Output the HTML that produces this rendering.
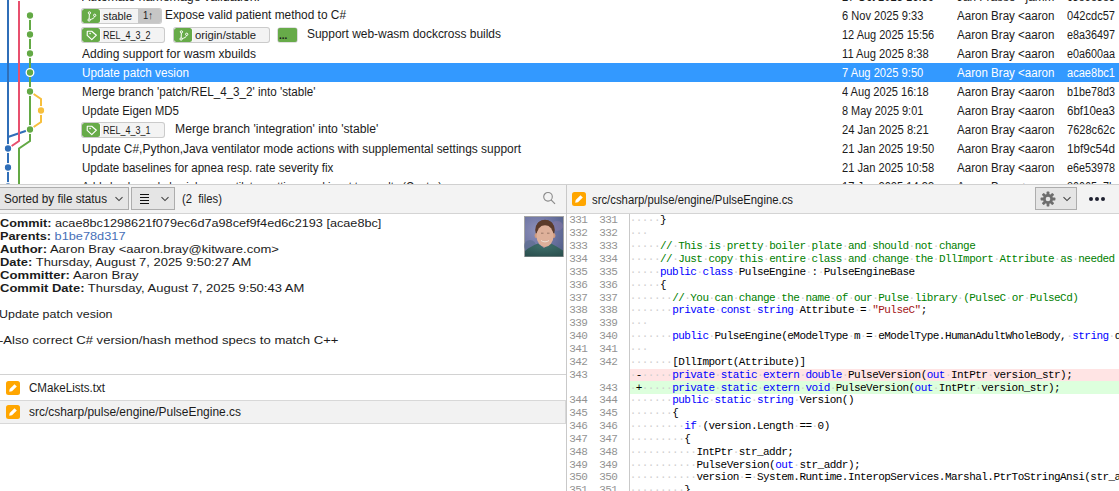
<!DOCTYPE html>
<html><head><meta charset="utf-8"><style>
html,body{margin:0;padding:0;}
body{width:1119px;height:491px;overflow:hidden;position:relative;background:#fff;font-family:'Liberation Sans', sans-serif;}
.t{position:absolute;white-space:pre;}
svg{position:absolute;}
</style></head><body>
<div style="position:absolute;left:0px;top:63px;width:1119px;height:19px;background:#3399ff"></div>
<svg style="left:0;top:0" width="60" height="184" viewBox="0 0 60 184">
<g fill="none" stroke-width="2">
<path d="M8,0 V184" stroke="#2f6eb8"/>
<path d="M8,137 L30,129.5" stroke="#2f6eb8"/>
<path d="M19,1 V141 L8,148.5" stroke="#e8506e"/>
<path d="M30,15.5 V141 L19,148.5 V184" stroke="#63a945"/>
<path d="M30,91.5 L41,99 V122 L30,129.5" stroke="#f7bf3c"/>
</g>
<circle cx="30" cy="15.5" r="3.8" fill="#63a945" stroke="#fff" stroke-width="1.3"/><circle cx="30" cy="34.5" r="3.8" fill="#63a945" stroke="#fff" stroke-width="1.3"/><circle cx="30" cy="53.5" r="3.8" fill="#63a945" stroke="#fff" stroke-width="1.3"/><circle cx="30" cy="72.5" r="3.8" fill="#63a945" stroke="#fff" stroke-width="1.3"/><circle cx="30" cy="91.5" r="3.8" fill="#63a945" stroke="#fff" stroke-width="1.3"/>
<circle cx="41" cy="110.5" r="3.8" fill="#f7bf3c" stroke="#fff" stroke-width="1.3"/><circle cx="30" cy="129.5" r="3.8" fill="#63a945" stroke="#fff" stroke-width="1.3"/><circle cx="8" cy="148.5" r="3.8" fill="#2f6eb8" stroke="#fff" stroke-width="1.3"/><circle cx="8" cy="167.5" r="3.8" fill="#2f6eb8" stroke="#fff" stroke-width="1.3"/><circle cx="8" cy="186.5" r="3.8" fill="#2f6eb8" stroke="#fff" stroke-width="1.3"/>
</svg>
<div id="t2" class="t" style="left:82px;top:-12.16px;font-size:12px;line-height:18px;color:#1b1b1b;font-weight:normal;font-family:'Liberation Sans', sans-serif;transform:scaleX(1.0342);transform-origin:0 0;">Automate namemage validation.</div>
<div style="position:absolute;left:82px;top:8.5px;width:79px;height:14px;background:#f3f3f3;border-radius:2px;box-shadow:0 0 0 1px #cbcbcb;overflow:hidden"><div style="position:absolute;left:0;top:0;width:18px;height:14px;background:#67ab49;border-radius:2.5px;box-shadow:1px 0 0 #fafafa"><svg width="18" height="14" viewBox="0 0 18 14" style="position:absolute;left:0;top:0"><g fill="none" stroke="#fff" stroke-width="1"><circle cx="7.4" cy="3.9" r="1.15"/><circle cx="12.7" cy="6.3" r="1.15"/><circle cx="7.1" cy="11" r="1.15"/><path d="M7.35,5.05 L7.15,9.85 M8.1,10.5 C10.6,10.2 12.3,8.9 12.6,7.45"/></g></svg></div><div style="position:absolute;right:0;top:0;width:23px;height:14px;background:#c6c6c6"></div></div>
<div id="t4" class="t" style="left:103px;top:8.19px;font-size:11px;line-height:16px;color:#1b1b1b;font-weight:normal;font-family:'Liberation Sans', sans-serif;transform:scaleX(0.9878);transform-origin:0 0;">stable</div>
<div id="t5" class="t" style="left:142.5px;top:7.49px;font-size:11px;line-height:16px;color:#1b1b1b;font-weight:normal;font-family:'Liberation Sans', sans-serif;transform:scaleX(0.8602);transform-origin:0 0;">1↑</div>
<div id="t6" class="t" style="left:165px;top:5.84px;font-size:12px;line-height:18px;color:#1b1b1b;font-weight:normal;font-family:'Liberation Sans', sans-serif;transform:scaleX(0.9903);transform-origin:0 0;">Expose valid patient method to C#</div>
<div style="position:absolute;left:82px;top:27.5px;width:82px;height:14px;background:#f3f3f3;border-radius:2px;box-shadow:0 0 0 1px #cbcbcb;overflow:hidden"><div style="position:absolute;left:0;top:0;width:18px;height:14px;background:#67ab49;border-radius:2.5px;box-shadow:1px 0 0 #fafafa"><svg width="18" height="14" viewBox="0 0 18 14" style="position:absolute;left:0;top:0"><path d="M5.3,3.2 H9.7 L14.4,7.2 L9.8,11.7 L5.2,7.3 Z" fill="none" stroke="#fff" stroke-width="1.15" stroke-linejoin="round"/><rect x="7.4" y="4.8" width="1.4" height="1.4" fill="#fff"/></svg></div></div>
<div id="t8" class="t" style="left:103px;top:27.19px;font-size:11px;line-height:16px;color:#1b1b1b;font-weight:normal;font-family:'Liberation Sans', sans-serif;transform:scaleX(0.8174);transform-origin:0 0;">REL_4_3_2</div>
<div style="position:absolute;left:174px;top:27.5px;width:95px;height:14px;background:#f3f3f3;border-radius:2px;box-shadow:0 0 0 1px #cbcbcb;overflow:hidden"><div style="position:absolute;left:0;top:0;width:18px;height:14px;background:#67ab49;border-radius:2.5px;box-shadow:1px 0 0 #fafafa"><svg width="18" height="14" viewBox="0 0 18 14" style="position:absolute;left:0;top:0"><g fill="none" stroke="#fff" stroke-width="1"><circle cx="7.4" cy="3.9" r="1.15"/><circle cx="12.7" cy="6.3" r="1.15"/><circle cx="7.1" cy="11" r="1.15"/><path d="M7.35,5.05 L7.15,9.85 M8.1,10.5 C10.6,10.2 12.3,8.9 12.6,7.45"/></g></svg></div></div>
<div id="t10" class="t" style="left:195px;top:27.19px;font-size:11px;line-height:16px;color:#1b1b1b;font-weight:normal;font-family:'Liberation Sans', sans-serif;transform:scaleX(1.0282);transform-origin:0 0;">origin/stable</div>
<div style="position:absolute;left:278px;top:27.5px;width:19px;height:14px;background:#67ab49;border-radius:2px;box-shadow:0 0 0 0.6px #c4c4c4"></div>
<div id="t12" class="t" style="left:279px;top:28.04px;font-size:10px;line-height:15px;color:#1b1b1b;font-weight:bold;font-family:'Liberation Sans', sans-serif;">...</div>
<div id="t13" class="t" style="left:307px;top:24.84px;font-size:12px;line-height:18px;color:#1b1b1b;font-weight:normal;font-family:'Liberation Sans', sans-serif;transform:scaleX(0.9961);transform-origin:0 0;">Support web-wasm dockcross builds</div>
<div id="t14" class="t" style="left:82px;top:44.84px;font-size:12px;line-height:18px;color:#1b1b1b;font-weight:normal;font-family:'Liberation Sans', sans-serif;transform:scaleX(1.0033);transform-origin:0 0;">Adding support for wasm xbuilds</div>
<div id="t15" class="t" style="left:82px;top:63.84px;font-size:12px;line-height:18px;color:#fff;font-weight:normal;font-family:'Liberation Sans', sans-serif;transform:scaleX(0.9780);transform-origin:0 0;">Update patch vesion</div>
<div id="t16" class="t" style="left:82px;top:82.84px;font-size:12px;line-height:18px;color:#1b1b1b;font-weight:normal;font-family:'Liberation Sans', sans-serif;transform:scaleX(0.9703);transform-origin:0 0;">Merge branch 'patch/REL_4_3_2' into 'stable'</div>
<div id="t17" class="t" style="left:82px;top:101.84px;font-size:12px;line-height:18px;color:#1b1b1b;font-weight:normal;font-family:'Liberation Sans', sans-serif;transform:scaleX(0.9567);transform-origin:0 0;">Update Eigen MD5</div>
<div style="position:absolute;left:82px;top:122.5px;width:82px;height:14px;background:#f3f3f3;border-radius:2px;box-shadow:0 0 0 1px #cbcbcb;overflow:hidden"><div style="position:absolute;left:0;top:0;width:18px;height:14px;background:#67ab49;border-radius:2.5px;box-shadow:1px 0 0 #fafafa"><svg width="18" height="14" viewBox="0 0 18 14" style="position:absolute;left:0;top:0"><path d="M5.3,3.2 H9.7 L14.4,7.2 L9.8,11.7 L5.2,7.3 Z" fill="none" stroke="#fff" stroke-width="1.15" stroke-linejoin="round"/><rect x="7.4" y="4.8" width="1.4" height="1.4" fill="#fff"/></svg></div></div>
<div id="t19" class="t" style="left:103px;top:122.19px;font-size:11px;line-height:16px;color:#1b1b1b;font-weight:normal;font-family:'Liberation Sans', sans-serif;transform:scaleX(0.8174);transform-origin:0 0;">REL_4_3_1</div>
<div id="t20" class="t" style="left:175px;top:119.84px;font-size:12px;line-height:18px;color:#1b1b1b;font-weight:normal;font-family:'Liberation Sans', sans-serif;transform:scaleX(1.0133);transform-origin:0 0;">Merge branch 'integration' into 'stable'</div>
<div id="t21" class="t" style="left:82px;top:139.84px;font-size:12px;line-height:18px;color:#1b1b1b;font-weight:normal;font-family:'Liberation Sans', sans-serif;transform:scaleX(0.9956);transform-origin:0 0;">Update C#,Python,Java ventilator mode actions with supplemental settings support</div>
<div id="t22" class="t" style="left:82px;top:158.84px;font-size:12px;line-height:18px;color:#1b1b1b;font-weight:normal;font-family:'Liberation Sans', sans-serif;transform:scaleX(0.9635);transform-origin:0 0;">Update baselines for apnea resp. rate severity fix</div>
<div id="t23" class="t" style="left:82px;top:177.84px;font-size:12px;line-height:18px;color:#1b1b1b;font-weight:normal;font-family:'Liberation Sans', sans-serif;transform:scaleX(0.9148);transform-origin:0 0;">Add checks and physiology ventilator settings and input to results (Cont...)</div>
<div style="position:absolute;left:835px;top:0;width:115px;height:491px;overflow:hidden"><div style="position:absolute;left:-835px;top:0;width:1119px;height:491px"><div id="t24" class="t" style="left:842px;top:-12.16px;font-size:12px;line-height:18px;color:#1b1b1b;font-weight:normal;font-family:'Liberation Sans', sans-serif;transform:scaleX(0.9331);transform-origin:0 0;">27 Oct 2025 16:39</div></div></div>
<div style="position:absolute;left:950px;top:0;width:106px;height:491px;overflow:hidden"><div style="position:absolute;left:-950px;top:0;width:1119px;height:491px"><div id="t25" class="t" style="left:957px;top:-12.16px;font-size:12px;line-height:18px;color:#1b1b1b;font-weight:normal;font-family:'Liberation Sans', sans-serif;transform:scaleX(0.9835);transform-origin:0 0;">Jan Frasse &lt;jamm</div></div></div>
<div style="position:absolute;left:1060px;top:0;width:57px;height:491px;overflow:hidden"><div style="position:absolute;left:-1060px;top:0;width:1119px;height:491px"><div id="t26" class="t" style="left:1067px;top:-12.16px;font-size:12px;line-height:18px;color:#1b1b1b;font-weight:normal;font-family:'Liberation Sans', sans-serif;transform:scaleX(0.9105);transform-origin:0 0;">c5e6e5e5</div></div></div>
<div style="position:absolute;left:835px;top:0;width:115px;height:491px;overflow:hidden"><div style="position:absolute;left:-835px;top:0;width:1119px;height:491px"><div id="t27" class="t" style="left:842px;top:6.84px;font-size:12px;line-height:18px;color:#1b1b1b;font-weight:normal;font-family:'Liberation Sans', sans-serif;transform:scaleX(0.9230);transform-origin:0 0;">6 Nov 2025 9:33</div></div></div>
<div style="position:absolute;left:950px;top:0;width:106px;height:491px;overflow:hidden"><div style="position:absolute;left:-950px;top:0;width:1119px;height:491px"><div id="t28" class="t" style="left:957px;top:6.84px;font-size:12px;line-height:18px;color:#1b1b1b;font-weight:normal;font-family:'Liberation Sans', sans-serif;transform:scaleX(0.9638);transform-origin:0 0;">Aaron Bray &lt;aaron</div></div></div>
<div style="position:absolute;left:1060px;top:0;width:57px;height:491px;overflow:hidden"><div style="position:absolute;left:-1060px;top:0;width:1119px;height:491px"><div id="t29" class="t" style="left:1067px;top:6.84px;font-size:12px;line-height:18px;color:#1b1b1b;font-weight:normal;font-family:'Liberation Sans', sans-serif;transform:scaleX(0.9222);transform-origin:0 0;">042cdc57</div></div></div>
<div style="position:absolute;left:835px;top:0;width:115px;height:491px;overflow:hidden"><div style="position:absolute;left:-835px;top:0;width:1119px;height:491px"><div id="t30" class="t" style="left:842px;top:25.84px;font-size:12px;line-height:18px;color:#1b1b1b;font-weight:normal;font-family:'Liberation Sans', sans-serif;transform:scaleX(0.9144);transform-origin:0 0;">12 Aug 2025 15:56</div></div></div>
<div style="position:absolute;left:950px;top:0;width:106px;height:491px;overflow:hidden"><div style="position:absolute;left:-950px;top:0;width:1119px;height:491px"><div id="t31" class="t" style="left:957px;top:25.84px;font-size:12px;line-height:18px;color:#1b1b1b;font-weight:normal;font-family:'Liberation Sans', sans-serif;transform:scaleX(0.9638);transform-origin:0 0;">Aaron Bray &lt;aaron</div></div></div>
<div style="position:absolute;left:1060px;top:0;width:57px;height:491px;overflow:hidden"><div style="position:absolute;left:-1060px;top:0;width:1119px;height:491px"><div id="t32" class="t" style="left:1067px;top:25.84px;font-size:12px;line-height:18px;color:#1b1b1b;font-weight:normal;font-family:'Liberation Sans', sans-serif;transform:scaleX(0.8990);transform-origin:0 0;">e8a36497</div></div></div>
<div style="position:absolute;left:835px;top:0;width:115px;height:491px;overflow:hidden"><div style="position:absolute;left:-835px;top:0;width:1119px;height:491px"><div id="t33" class="t" style="left:842px;top:44.84px;font-size:12px;line-height:18px;color:#1b1b1b;font-weight:normal;font-family:'Liberation Sans', sans-serif;transform:scaleX(0.9304);transform-origin:0 0;">11 Aug 2025 8:38</div></div></div>
<div style="position:absolute;left:950px;top:0;width:106px;height:491px;overflow:hidden"><div style="position:absolute;left:-950px;top:0;width:1119px;height:491px"><div id="t34" class="t" style="left:957px;top:44.84px;font-size:12px;line-height:18px;color:#1b1b1b;font-weight:normal;font-family:'Liberation Sans', sans-serif;transform:scaleX(0.9638);transform-origin:0 0;">Aaron Bray &lt;aaron</div></div></div>
<div style="position:absolute;left:1060px;top:0;width:57px;height:491px;overflow:hidden"><div style="position:absolute;left:-1060px;top:0;width:1119px;height:491px"><div id="t35" class="t" style="left:1067px;top:44.84px;font-size:12px;line-height:18px;color:#1b1b1b;font-weight:normal;font-family:'Liberation Sans', sans-serif;transform:scaleX(0.8990);transform-origin:0 0;">e0a600aa</div></div></div>
<div style="position:absolute;left:835px;top:0;width:115px;height:491px;overflow:hidden"><div style="position:absolute;left:-835px;top:0;width:1119px;height:491px"><div id="t36" class="t" style="left:842px;top:63.84px;font-size:12px;line-height:18px;color:#fff;font-weight:normal;font-family:'Liberation Sans', sans-serif;transform:scaleX(0.9300);transform-origin:0 0;">7 Aug 2025 9:50</div></div></div>
<div style="position:absolute;left:950px;top:0;width:106px;height:491px;overflow:hidden"><div style="position:absolute;left:-950px;top:0;width:1119px;height:491px"><div id="t37" class="t" style="left:957px;top:63.84px;font-size:12px;line-height:18px;color:#fff;font-weight:normal;font-family:'Liberation Sans', sans-serif;transform:scaleX(0.9638);transform-origin:0 0;">Aaron Bray &lt;aaron</div></div></div>
<div style="position:absolute;left:1060px;top:0;width:57px;height:491px;overflow:hidden"><div style="position:absolute;left:-1060px;top:0;width:1119px;height:491px"><div id="t38" class="t" style="left:1067px;top:63.84px;font-size:12px;line-height:18px;color:#fff;font-weight:normal;font-family:'Liberation Sans', sans-serif;transform:scaleX(0.9222);transform-origin:0 0;">acae8bc1</div></div></div>
<div style="position:absolute;left:835px;top:0;width:115px;height:491px;overflow:hidden"><div style="position:absolute;left:-835px;top:0;width:1119px;height:491px"><div id="t39" class="t" style="left:842px;top:82.84px;font-size:12px;line-height:18px;color:#1b1b1b;font-weight:normal;font-family:'Liberation Sans', sans-serif;transform:scaleX(0.9216);transform-origin:0 0;">4 Aug 2025 16:18</div></div></div>
<div style="position:absolute;left:950px;top:0;width:106px;height:491px;overflow:hidden"><div style="position:absolute;left:-950px;top:0;width:1119px;height:491px"><div id="t40" class="t" style="left:957px;top:82.84px;font-size:12px;line-height:18px;color:#1b1b1b;font-weight:normal;font-family:'Liberation Sans', sans-serif;transform:scaleX(0.9638);transform-origin:0 0;">Aaron Bray &lt;aaron</div></div></div>
<div style="position:absolute;left:1060px;top:0;width:57px;height:491px;overflow:hidden"><div style="position:absolute;left:-1060px;top:0;width:1119px;height:491px"><div id="t41" class="t" style="left:1067px;top:82.84px;font-size:12px;line-height:18px;color:#1b1b1b;font-weight:normal;font-family:'Liberation Sans', sans-serif;transform:scaleX(0.8990);transform-origin:0 0;">b1be78d3</div></div></div>
<div style="position:absolute;left:835px;top:0;width:115px;height:491px;overflow:hidden"><div style="position:absolute;left:-835px;top:0;width:1119px;height:491px"><div id="t42" class="t" style="left:842px;top:101.84px;font-size:12px;line-height:18px;color:#1b1b1b;font-weight:normal;font-family:'Liberation Sans', sans-serif;transform:scaleX(0.9093);transform-origin:0 0;">8 May 2025 9:01</div></div></div>
<div style="position:absolute;left:950px;top:0;width:106px;height:491px;overflow:hidden"><div style="position:absolute;left:-950px;top:0;width:1119px;height:491px"><div id="t43" class="t" style="left:957px;top:101.84px;font-size:12px;line-height:18px;color:#1b1b1b;font-weight:normal;font-family:'Liberation Sans', sans-serif;transform:scaleX(0.9638);transform-origin:0 0;">Aaron Bray &lt;aaron</div></div></div>
<div style="position:absolute;left:1060px;top:0;width:57px;height:491px;overflow:hidden"><div style="position:absolute;left:-1060px;top:0;width:1119px;height:491px"><div id="t44" class="t" style="left:1067px;top:101.84px;font-size:12px;line-height:18px;color:#1b1b1b;font-weight:normal;font-family:'Liberation Sans', sans-serif;transform:scaleX(0.9588);transform-origin:0 0;">6bf10ea3</div></div></div>
<div style="position:absolute;left:835px;top:0;width:115px;height:491px;overflow:hidden"><div style="position:absolute;left:-835px;top:0;width:1119px;height:491px"><div id="t45" class="t" style="left:842px;top:120.84px;font-size:12px;line-height:18px;color:#1b1b1b;font-weight:normal;font-family:'Liberation Sans', sans-serif;transform:scaleX(0.9350);transform-origin:0 0;">24 Jan 2025 8:21</div></div></div>
<div style="position:absolute;left:950px;top:0;width:106px;height:491px;overflow:hidden"><div style="position:absolute;left:-950px;top:0;width:1119px;height:491px"><div id="t46" class="t" style="left:957px;top:120.84px;font-size:12px;line-height:18px;color:#1b1b1b;font-weight:normal;font-family:'Liberation Sans', sans-serif;transform:scaleX(0.9638);transform-origin:0 0;">Aaron Bray &lt;aaron</div></div></div>
<div style="position:absolute;left:1060px;top:0;width:57px;height:491px;overflow:hidden"><div style="position:absolute;left:-1060px;top:0;width:1119px;height:491px"><div id="t47" class="t" style="left:1067px;top:120.84px;font-size:12px;line-height:18px;color:#1b1b1b;font-weight:normal;font-family:'Liberation Sans', sans-serif;transform:scaleX(0.9222);transform-origin:0 0;">7628c62c</div></div></div>
<div style="position:absolute;left:835px;top:0;width:115px;height:491px;overflow:hidden"><div style="position:absolute;left:-835px;top:0;width:1119px;height:491px"><div id="t48" class="t" style="left:842px;top:139.84px;font-size:12px;line-height:18px;color:#1b1b1b;font-weight:normal;font-family:'Liberation Sans', sans-serif;transform:scaleX(0.9268);transform-origin:0 0;">21 Jan 2025 19:50</div></div></div>
<div style="position:absolute;left:950px;top:0;width:106px;height:491px;overflow:hidden"><div style="position:absolute;left:-950px;top:0;width:1119px;height:491px"><div id="t49" class="t" style="left:957px;top:139.84px;font-size:12px;line-height:18px;color:#1b1b1b;font-weight:normal;font-family:'Liberation Sans', sans-serif;transform:scaleX(0.9638);transform-origin:0 0;">Aaron Bray &lt;aaron</div></div></div>
<div style="position:absolute;left:1060px;top:0;width:57px;height:491px;overflow:hidden"><div style="position:absolute;left:-1060px;top:0;width:1119px;height:491px"><div id="t50" class="t" style="left:1067px;top:139.84px;font-size:12px;line-height:18px;color:#1b1b1b;font-weight:normal;font-family:'Liberation Sans', sans-serif;transform:scaleX(0.9718);transform-origin:0 0;">1bf9c54d</div></div></div>
<div style="position:absolute;left:835px;top:0;width:115px;height:491px;overflow:hidden"><div style="position:absolute;left:-835px;top:0;width:1119px;height:491px"><div id="t51" class="t" style="left:842px;top:158.84px;font-size:12px;line-height:18px;color:#1b1b1b;font-weight:normal;font-family:'Liberation Sans', sans-serif;transform:scaleX(0.9268);transform-origin:0 0;">21 Jan 2025 10:58</div></div></div>
<div style="position:absolute;left:950px;top:0;width:106px;height:491px;overflow:hidden"><div style="position:absolute;left:-950px;top:0;width:1119px;height:491px"><div id="t52" class="t" style="left:957px;top:158.84px;font-size:12px;line-height:18px;color:#1b1b1b;font-weight:normal;font-family:'Liberation Sans', sans-serif;transform:scaleX(0.9638);transform-origin:0 0;">Aaron Bray &lt;aaron</div></div></div>
<div style="position:absolute;left:1060px;top:0;width:57px;height:491px;overflow:hidden"><div style="position:absolute;left:-1060px;top:0;width:1119px;height:491px"><div id="t53" class="t" style="left:1067px;top:158.84px;font-size:12px;line-height:18px;color:#1b1b1b;font-weight:normal;font-family:'Liberation Sans', sans-serif;transform:scaleX(0.8990);transform-origin:0 0;">e6e53978</div></div></div>
<div style="position:absolute;left:835px;top:0;width:115px;height:491px;overflow:hidden"><div style="position:absolute;left:-835px;top:0;width:1119px;height:491px"><div id="t54" class="t" style="left:842px;top:177.84px;font-size:12px;line-height:18px;color:#1b1b1b;font-weight:normal;font-family:'Liberation Sans', sans-serif;transform:scaleX(0.9268);transform-origin:0 0;">17 Jan 2025 14:33</div></div></div>
<div style="position:absolute;left:950px;top:0;width:106px;height:491px;overflow:hidden"><div style="position:absolute;left:-950px;top:0;width:1119px;height:491px"><div id="t55" class="t" style="left:957px;top:177.84px;font-size:12px;line-height:18px;color:#1b1b1b;font-weight:normal;font-family:'Liberation Sans', sans-serif;transform:scaleX(0.9638);transform-origin:0 0;">Aaron Bray &lt;aaron</div></div></div>
<div style="position:absolute;left:1060px;top:0;width:57px;height:491px;overflow:hidden"><div style="position:absolute;left:-1060px;top:0;width:1119px;height:491px"><div id="t56" class="t" style="left:1067px;top:177.84px;font-size:12px;line-height:18px;color:#1b1b1b;font-weight:normal;font-family:'Liberation Sans', sans-serif;transform:scaleX(0.8990);transform-origin:0 0;">80065e7b</div></div></div>
<div style="position:absolute;left:0px;top:184px;width:1119px;height:1px;background:#d0d0d0"></div>
<div style="position:absolute;left:0px;top:185px;width:566px;height:28px;background:#f3f3f3"></div>
<div style="position:absolute;left:567px;top:185px;width:552px;height:28px;background:#f3f3f3"></div>
<div style="position:absolute;left:0px;top:213px;width:1119px;height:1px;background:#d4d4d4"></div>
<div style="position:absolute;left:566px;top:185px;width:1px;height:306px;background:#c9c9c9"></div>
<div style="position:absolute;left:-1px;top:187px;width:130px;height:23px;background:#e5e5e5;border:1px solid #adadad;box-sizing:border-box"></div>
<div id="t63" class="t" style="left:4px;top:189.84px;font-size:12px;line-height:18px;color:#1b1b1b;font-weight:normal;font-family:'Liberation Sans', sans-serif;transform:scaleX(0.9773);transform-origin:0 0;">Sorted by file status</div>
<svg style="left:114px;top:196px" width="10" height="6" viewBox="0 0 10 6"><path d="M1.5,1.2 L5,4.6 L8.5,1.2" fill="none" stroke="#444" stroke-width="1.1"/></svg>
<div style="position:absolute;left:131px;top:187px;width:44px;height:23px;background:#e5e5e5;border:1px solid #adadad;box-sizing:border-box"></div>
<svg style="left:140px;top:193px" width="10" height="12" viewBox="0 0 10 12"><path d="M0,1.5 H9 M0,4.5 H9 M0,7.5 H9 M0,10.5 H9" fill="none" stroke="#111" stroke-width="1.2"/></svg>
<svg style="left:160px;top:196px" width="10" height="6" viewBox="0 0 10 6"><path d="M1.5,1.2 L5,4.6 L8.5,1.2" fill="none" stroke="#444" stroke-width="1.1"/></svg>
<div id="t68" class="t" style="left:182px;top:189.84px;font-size:12px;line-height:18px;color:#1b1b1b;font-weight:normal;font-family:'Liberation Sans', sans-serif;transform:scaleX(0.9370);transform-origin:0 0;">(2  files)</div>
<svg style="left:541px;top:191px" width="16" height="16" viewBox="0 0 16 16"><circle cx="7" cy="5.8" r="4.3" fill="none" stroke="#8a8a8a" stroke-width="1.1"/><path d="M10.1,8.9 L14,12.8" stroke="#8a8a8a" stroke-width="1.2"/></svg>
<svg style="left:572px;top:192px" width="14" height="14" viewBox="0 0 14 14"><rect x="0" y="0" width="14" height="14" rx="2.5" fill="#ffa600"/><path d="M3.2,10.8 L3.7,8 L8.5,3.2 L10.8,5.5 L6,10.3 Z" fill="#fff"/></svg>
<div id="t71" class="t" style="left:592px;top:190.84px;font-size:12px;line-height:18px;color:#1b1b1b;font-weight:normal;font-family:'Liberation Sans', sans-serif;transform:scaleX(0.9446);transform-origin:0 0;">src/csharp/pulse/engine/PulseEngine.cs</div>
<div style="position:absolute;left:1035px;top:187px;width:42px;height:23px;background:#e5e5e5;border:1px solid #adadad;box-sizing:border-box"></div>
<svg style="left:1040px;top:191px" width="16" height="16" viewBox="0 0 16 16"><g fill="#6e6e6e"><circle cx="8" cy="8" r="5"/><rect x="6.6" y="0.6" width="2.8" height="3.4" rx="0.6" transform="rotate(0 8 8)"/><rect x="6.6" y="0.6" width="2.8" height="3.4" rx="0.6" transform="rotate(45 8 8)"/><rect x="6.6" y="0.6" width="2.8" height="3.4" rx="0.6" transform="rotate(90 8 8)"/><rect x="6.6" y="0.6" width="2.8" height="3.4" rx="0.6" transform="rotate(135 8 8)"/><rect x="6.6" y="0.6" width="2.8" height="3.4" rx="0.6" transform="rotate(180 8 8)"/><rect x="6.6" y="0.6" width="2.8" height="3.4" rx="0.6" transform="rotate(225 8 8)"/><rect x="6.6" y="0.6" width="2.8" height="3.4" rx="0.6" transform="rotate(270 8 8)"/><rect x="6.6" y="0.6" width="2.8" height="3.4" rx="0.6" transform="rotate(315 8 8)"/></g><circle cx="8" cy="8" r="2.3" fill="#e5e5e5"/></svg>
<svg style="left:1062px;top:196px" width="10" height="6" viewBox="0 0 10 6"><path d="M1.5,1.2 L5,4.6 L8.5,1.2" fill="none" stroke="#444" stroke-width="1.1"/></svg>
<svg style="left:1086px;top:195px" width="22" height="8" viewBox="0 0 22 8"><g fill="#1e2030"><circle cx="5" cy="4" r="2"/><circle cx="11" cy="4" r="2"/><circle cx="17" cy="4" r="2"/></g></svg>
<div id="t76" class="t" style="left:0px;top:214.99px;font-size:11px;line-height:16px;color:#1b1b1b;font-weight:normal;font-family:'Liberation Sans', sans-serif;"></div>
<div id="t77" class="t" style="left:0px;top:214.99px;font-size:11px;line-height:16px;color:#1b1b1b;font-weight:normal;font-family:'Liberation Sans', sans-serif;transform:scaleX(1.1527);transform-origin:0 0;"><b>Commit:</b> <span style="color:#1b1b1b">acae8bc1298621f079ec6d7a98cef9f4ed6c2193 [acae8bc]</span></div>
<div id="t78" class="t" style="left:0px;top:227.99px;font-size:11px;line-height:16px;color:#1b1b1b;font-weight:normal;font-family:'Liberation Sans', sans-serif;transform:scaleX(1.1590);transform-origin:0 0;"><b>Parents:</b> <span style="color:#4870b8">b1be78d317</span></div>
<div id="t79" class="t" style="left:0px;top:240.99px;font-size:11px;line-height:16px;color:#1b1b1b;font-weight:normal;font-family:'Liberation Sans', sans-serif;transform:scaleX(1.1841);transform-origin:0 0;"><b>Author:</b> <span style="color:#1b1b1b">Aaron Bray &lt;aaron.bray@kitware.com&gt;</span></div>
<div id="t80" class="t" style="left:0px;top:253.99px;font-size:11px;line-height:16px;color:#1b1b1b;font-weight:normal;font-family:'Liberation Sans', sans-serif;transform:scaleX(1.1767);transform-origin:0 0;"><b>Date:</b> <span style="color:#1b1b1b">Thursday, August 7, 2025 9:50:27 AM</span></div>
<div id="t81" class="t" style="left:0px;top:266.99px;font-size:11px;line-height:16px;color:#1b1b1b;font-weight:normal;font-family:'Liberation Sans', sans-serif;transform:scaleX(1.1924);transform-origin:0 0;"><b>Committer:</b> <span style="color:#1b1b1b">Aaron Bray</span></div>
<div id="t82" class="t" style="left:0px;top:279.99px;font-size:11px;line-height:16px;color:#1b1b1b;font-weight:normal;font-family:'Liberation Sans', sans-serif;transform:scaleX(1.1811);transform-origin:0 0;"><b>Commit Date:</b> <span style="color:#1b1b1b">Thursday, August 7, 2025 9:50:43 AM</span></div>
<div id="t83" class="t" style="left:-1px;top:305.99px;font-size:11px;line-height:16px;color:#1b1b1b;font-weight:normal;font-family:'Liberation Sans', sans-serif;transform:scaleX(1.1316);transform-origin:0 0;">Update patch vesion</div>
<div id="t84" class="t" style="left:-1px;top:331.99px;font-size:11px;line-height:16px;color:#1b1b1b;font-weight:normal;font-family:'Liberation Sans', sans-serif;transform:scaleX(1.1916);transform-origin:0 0;">-Also correct C# version/hash method specs to match C++</div>
<svg style="left:524px;top:216px" width="40" height="41" viewBox="0 0 40 41">
<defs><radialGradient id="bg" cx="0.3" cy="0.35" r="0.85"><stop offset="0" stop-color="#8c8fb8"/><stop offset="0.55" stop-color="#6d74a2"/><stop offset="1" stop-color="#525f88"/></radialGradient>
<radialGradient id="sh" cx="0.5" cy="0.2" r="0.9"><stop offset="0" stop-color="#3f6f6a"/><stop offset="1" stop-color="#2a4f4e"/></radialGradient></defs>
<rect x="0.5" y="0.5" width="39" height="40" fill="url(#bg)" stroke="#a4a4a4" stroke-width="1"/>
<ellipse cx="33" cy="10" rx="6" ry="5" fill="#8a7aa8" opacity="0.5"/>
<ellipse cx="6" cy="30" rx="6" ry="6" fill="#5a6c8c" opacity="0.6"/>
<path d="M1,40.5 L1,35 C4,32 9,29.5 14,27.5 L20,32 L27,27.5 C31,29.5 35,32 39,34.5 L39,40.5 Z" fill="url(#sh)"/>
<path d="M15,25.5 L20,32 L25.5,25.5 Z" fill="#c8937c"/>
<ellipse cx="21" cy="14" rx="9.8" ry="10.3" fill="#5b3b2b"/>
<ellipse cx="12.2" cy="19.5" rx="1.6" ry="2.6" fill="#cf9a80"/>
<ellipse cx="29.8" cy="19.5" rx="1.6" ry="2.6" fill="#cf9a80"/>
<ellipse cx="21" cy="20" rx="8.5" ry="11" fill="#deb09a"/>
<path d="M12.3,16 C12.5,11 15,9.2 21,9.2 C27,9.2 29.5,11 29.7,16 C31,9 28,4 21,4 C14,4 11,9 12.3,16 Z" fill="#5b3b2b"/>
<path d="M17,17.2 h2.5 M23,17.2 h2.5" stroke="#8a6a5a" stroke-width="0.8"/>
<path d="M17,24.5 C19,26.3 23,26.3 25,24.5" fill="none" stroke="#f0e2d6" stroke-width="1"/>
</svg>
<div style="position:absolute;left:0px;top:374px;width:566px;height:1px;background:#d2d2d2"></div>
<div style="position:absolute;left:0px;top:400px;width:566px;height:24px;background:#f2f2f2;border-top:1px solid #d8d8d8;border-bottom:1px solid #d8d8d8;border-right:1px solid #d8d8d8;box-sizing:border-box"></div>
<svg style="left:6px;top:381px" width="14" height="14" viewBox="0 0 14 14"><rect x="0" y="0" width="14" height="14" rx="2.5" fill="#ffa600"/><path d="M3.2,10.8 L3.7,8 L8.5,3.2 L10.8,5.5 L6,10.3 Z" fill="#fff"/></svg>
<svg style="left:6px;top:405px" width="14" height="14" viewBox="0 0 14 14"><rect x="0" y="0" width="14" height="14" rx="2.5" fill="#ffa600"/><path d="M3.2,10.8 L3.7,8 L8.5,3.2 L10.8,5.5 L6,10.3 Z" fill="#fff"/></svg>
<div id="t90" class="t" style="left:29px;top:378.84px;font-size:12px;line-height:18px;color:#1b1b1b;font-weight:normal;font-family:'Liberation Sans', sans-serif;transform:scaleX(0.9658);transform-origin:0 0;">CMakeLists.txt</div>
<div id="t91" class="t" style="left:29px;top:402.84px;font-size:12px;line-height:18px;color:#1b1b1b;font-weight:normal;font-family:'Liberation Sans', sans-serif;transform:scaleX(0.9963);transform-origin:0 0;">src/csharp/pulse/engine/PulseEngine.cs</div>
<div style="position:absolute;left:629px;top:214px;width:1px;height:277px;background:#c9c9c9"></div>
<div id="t93" class="t" style="left:569.2px;top:212.47px;font-size:11px;line-height:16px;color:#939393;font-weight:normal;font-family:'Liberation Mono', monospace;letter-spacing:-0.54px">331</div>
<div id="t94" class="t" style="left:599.2px;top:212.47px;font-size:11px;line-height:16px;color:#939393;font-weight:normal;font-family:'Liberation Mono', monospace;letter-spacing:-0.54px">331</div>
<div style="position:absolute;left:630px;top:0;width:489px;height:491px;overflow:hidden"><div style="position:absolute;left:-630px;top:0;width:1119px;height:491px"><div id="t95" class="t" style="left:629.7px;top:212.47px;font-size:11px;line-height:16px;color:#000000;font-weight:normal;font-family:'Liberation Mono', monospace;letter-spacing:-0.54px"><span style="color:#cfcfcf">·····</span>}</div></div></div>
<div id="t96" class="t" style="left:569.2px;top:225.32px;font-size:11px;line-height:16px;color:#939393;font-weight:normal;font-family:'Liberation Mono', monospace;letter-spacing:-0.54px">332</div>
<div id="t97" class="t" style="left:599.2px;top:225.32px;font-size:11px;line-height:16px;color:#939393;font-weight:normal;font-family:'Liberation Mono', monospace;letter-spacing:-0.54px">332</div>
<div style="position:absolute;left:630px;top:0;width:489px;height:491px;overflow:hidden"><div style="position:absolute;left:-630px;top:0;width:1119px;height:491px"><div id="t98" class="t" style="left:629.7px;top:225.32px;font-size:11px;line-height:16px;color:#000000;font-weight:normal;font-family:'Liberation Mono', monospace;letter-spacing:-0.54px"><span style="color:#cfcfcf">···</span></div></div></div>
<div id="t99" class="t" style="left:569.2px;top:238.17px;font-size:11px;line-height:16px;color:#939393;font-weight:normal;font-family:'Liberation Mono', monospace;letter-spacing:-0.54px">333</div>
<div id="t100" class="t" style="left:599.2px;top:238.17px;font-size:11px;line-height:16px;color:#939393;font-weight:normal;font-family:'Liberation Mono', monospace;letter-spacing:-0.54px">333</div>
<div style="position:absolute;left:630px;top:0;width:489px;height:491px;overflow:hidden"><div style="position:absolute;left:-630px;top:0;width:1119px;height:491px"><div id="t101" class="t" style="left:629.7px;top:238.17px;font-size:11px;line-height:16px;color:#000000;font-weight:normal;font-family:'Liberation Mono', monospace;letter-spacing:-0.54px"><span style="color:#cfcfcf">·····</span><span style="color:#008000">//</span><span style="color:#cfcfcf">·</span><span style="color:#008000">This</span><span style="color:#cfcfcf">·</span><span style="color:#008000">is</span><span style="color:#cfcfcf">·</span><span style="color:#008000">pretty</span><span style="color:#cfcfcf">·</span><span style="color:#008000">boiler</span><span style="color:#cfcfcf">·</span><span style="color:#008000">plate</span><span style="color:#cfcfcf">·</span><span style="color:#008000">and</span><span style="color:#cfcfcf">·</span><span style="color:#008000">should</span><span style="color:#cfcfcf">·</span><span style="color:#008000">not</span><span style="color:#cfcfcf">·</span><span style="color:#008000">change</span></div></div></div>
<div id="t102" class="t" style="left:569.2px;top:251.02px;font-size:11px;line-height:16px;color:#939393;font-weight:normal;font-family:'Liberation Mono', monospace;letter-spacing:-0.54px">334</div>
<div id="t103" class="t" style="left:599.2px;top:251.02px;font-size:11px;line-height:16px;color:#939393;font-weight:normal;font-family:'Liberation Mono', monospace;letter-spacing:-0.54px">334</div>
<div style="position:absolute;left:630px;top:0;width:489px;height:491px;overflow:hidden"><div style="position:absolute;left:-630px;top:0;width:1119px;height:491px"><div id="t104" class="t" style="left:629.7px;top:251.02px;font-size:11px;line-height:16px;color:#000000;font-weight:normal;font-family:'Liberation Mono', monospace;letter-spacing:-0.54px"><span style="color:#cfcfcf">·····</span><span style="color:#008000">//</span><span style="color:#cfcfcf">·</span><span style="color:#008000">Just</span><span style="color:#cfcfcf">·</span><span style="color:#008000">copy</span><span style="color:#cfcfcf">·</span><span style="color:#008000">this</span><span style="color:#cfcfcf">·</span><span style="color:#008000">entire</span><span style="color:#cfcfcf">·</span><span style="color:#008000">class</span><span style="color:#cfcfcf">·</span><span style="color:#008000">and</span><span style="color:#cfcfcf">·</span><span style="color:#008000">change</span><span style="color:#cfcfcf">·</span><span style="color:#008000">the</span><span style="color:#cfcfcf">·</span><span style="color:#008000">DllImport</span><span style="color:#cfcfcf">·</span><span style="color:#008000">Attribute</span><span style="color:#cfcfcf">·</span><span style="color:#008000">as</span><span style="color:#cfcfcf">·</span><span style="color:#008000">needed</span></div></div></div>
<div id="t105" class="t" style="left:569.2px;top:263.87px;font-size:11px;line-height:16px;color:#939393;font-weight:normal;font-family:'Liberation Mono', monospace;letter-spacing:-0.54px">335</div>
<div id="t106" class="t" style="left:599.2px;top:263.87px;font-size:11px;line-height:16px;color:#939393;font-weight:normal;font-family:'Liberation Mono', monospace;letter-spacing:-0.54px">335</div>
<div style="position:absolute;left:630px;top:0;width:489px;height:491px;overflow:hidden"><div style="position:absolute;left:-630px;top:0;width:1119px;height:491px"><div id="t107" class="t" style="left:629.7px;top:263.87px;font-size:11px;line-height:16px;color:#000000;font-weight:normal;font-family:'Liberation Mono', monospace;letter-spacing:-0.54px"><span style="color:#cfcfcf">·····</span><span style="color:#0000ff">public</span><span style="color:#cfcfcf">·</span><span style="color:#0000ff">class</span><span style="color:#cfcfcf">·</span>PulseEngine<span style="color:#cfcfcf">·</span>:<span style="color:#cfcfcf">·</span>PulseEngineBase</div></div></div>
<div id="t108" class="t" style="left:569.2px;top:276.72px;font-size:11px;line-height:16px;color:#939393;font-weight:normal;font-family:'Liberation Mono', monospace;letter-spacing:-0.54px">336</div>
<div id="t109" class="t" style="left:599.2px;top:276.72px;font-size:11px;line-height:16px;color:#939393;font-weight:normal;font-family:'Liberation Mono', monospace;letter-spacing:-0.54px">336</div>
<div style="position:absolute;left:630px;top:0;width:489px;height:491px;overflow:hidden"><div style="position:absolute;left:-630px;top:0;width:1119px;height:491px"><div id="t110" class="t" style="left:629.7px;top:276.72px;font-size:11px;line-height:16px;color:#000000;font-weight:normal;font-family:'Liberation Mono', monospace;letter-spacing:-0.54px"><span style="color:#cfcfcf">·····</span>{</div></div></div>
<div id="t111" class="t" style="left:569.2px;top:289.57px;font-size:11px;line-height:16px;color:#939393;font-weight:normal;font-family:'Liberation Mono', monospace;letter-spacing:-0.54px">337</div>
<div id="t112" class="t" style="left:599.2px;top:289.57px;font-size:11px;line-height:16px;color:#939393;font-weight:normal;font-family:'Liberation Mono', monospace;letter-spacing:-0.54px">337</div>
<div style="position:absolute;left:630px;top:0;width:489px;height:491px;overflow:hidden"><div style="position:absolute;left:-630px;top:0;width:1119px;height:491px"><div id="t113" class="t" style="left:629.7px;top:289.57px;font-size:11px;line-height:16px;color:#000000;font-weight:normal;font-family:'Liberation Mono', monospace;letter-spacing:-0.54px"><span style="color:#cfcfcf">·······</span><span style="color:#008000">//</span><span style="color:#cfcfcf">·</span><span style="color:#008000">You</span><span style="color:#cfcfcf">·</span><span style="color:#008000">can</span><span style="color:#cfcfcf">·</span><span style="color:#008000">change</span><span style="color:#cfcfcf">·</span><span style="color:#008000">the</span><span style="color:#cfcfcf">·</span><span style="color:#008000">name</span><span style="color:#cfcfcf">·</span><span style="color:#008000">of</span><span style="color:#cfcfcf">·</span><span style="color:#008000">our</span><span style="color:#cfcfcf">·</span><span style="color:#008000">Pulse</span><span style="color:#cfcfcf">·</span><span style="color:#008000">library</span><span style="color:#cfcfcf">·</span><span style="color:#008000">(PulseC</span><span style="color:#cfcfcf">·</span><span style="color:#008000">or</span><span style="color:#cfcfcf">·</span><span style="color:#008000">PulseCd)</span></div></div></div>
<div id="t114" class="t" style="left:569.2px;top:302.42px;font-size:11px;line-height:16px;color:#939393;font-weight:normal;font-family:'Liberation Mono', monospace;letter-spacing:-0.54px">338</div>
<div id="t115" class="t" style="left:599.2px;top:302.42px;font-size:11px;line-height:16px;color:#939393;font-weight:normal;font-family:'Liberation Mono', monospace;letter-spacing:-0.54px">338</div>
<div style="position:absolute;left:630px;top:0;width:489px;height:491px;overflow:hidden"><div style="position:absolute;left:-630px;top:0;width:1119px;height:491px"><div id="t116" class="t" style="left:629.7px;top:302.42px;font-size:11px;line-height:16px;color:#000000;font-weight:normal;font-family:'Liberation Mono', monospace;letter-spacing:-0.54px"><span style="color:#cfcfcf">·······</span><span style="color:#0000ff">private</span><span style="color:#cfcfcf">·</span><span style="color:#0000ff">const</span><span style="color:#cfcfcf">·</span><span style="color:#0000ff">string</span><span style="color:#cfcfcf">·</span>Attribute<span style="color:#cfcfcf">·</span>=<span style="color:#cfcfcf">·</span><span style="color:#a31515">"PulseC"</span>;</div></div></div>
<div id="t117" class="t" style="left:569.2px;top:315.27px;font-size:11px;line-height:16px;color:#939393;font-weight:normal;font-family:'Liberation Mono', monospace;letter-spacing:-0.54px">339</div>
<div id="t118" class="t" style="left:599.2px;top:315.27px;font-size:11px;line-height:16px;color:#939393;font-weight:normal;font-family:'Liberation Mono', monospace;letter-spacing:-0.54px">339</div>
<div style="position:absolute;left:630px;top:0;width:489px;height:491px;overflow:hidden"><div style="position:absolute;left:-630px;top:0;width:1119px;height:491px"><div id="t119" class="t" style="left:629.7px;top:315.27px;font-size:11px;line-height:16px;color:#000000;font-weight:normal;font-family:'Liberation Mono', monospace;letter-spacing:-0.54px"><span style="color:#cfcfcf">···</span></div></div></div>
<div id="t120" class="t" style="left:569.2px;top:328.12px;font-size:11px;line-height:16px;color:#939393;font-weight:normal;font-family:'Liberation Mono', monospace;letter-spacing:-0.54px">340</div>
<div id="t121" class="t" style="left:599.2px;top:328.12px;font-size:11px;line-height:16px;color:#939393;font-weight:normal;font-family:'Liberation Mono', monospace;letter-spacing:-0.54px">340</div>
<div style="position:absolute;left:630px;top:0;width:489px;height:491px;overflow:hidden"><div style="position:absolute;left:-630px;top:0;width:1119px;height:491px"><div id="t122" class="t" style="left:629.7px;top:328.12px;font-size:11px;line-height:16px;color:#000000;font-weight:normal;font-family:'Liberation Mono', monospace;letter-spacing:-0.54px"><span style="color:#cfcfcf">·······</span><span style="color:#0000ff">public</span><span style="color:#cfcfcf">·</span>PulseEngine(eModelType<span style="color:#cfcfcf">·</span>m<span style="color:#cfcfcf">·</span>=<span style="color:#cfcfcf">·</span>eModelType.HumanAdultWholeBody,<span style="color:#cfcfcf">·</span><span style="color:#0000ff">string</span><span style="color:#cfcfcf">·</span>dataDir</div></div></div>
<div id="t123" class="t" style="left:569.2px;top:340.97px;font-size:11px;line-height:16px;color:#939393;font-weight:normal;font-family:'Liberation Mono', monospace;letter-spacing:-0.54px">341</div>
<div id="t124" class="t" style="left:599.2px;top:340.97px;font-size:11px;line-height:16px;color:#939393;font-weight:normal;font-family:'Liberation Mono', monospace;letter-spacing:-0.54px">341</div>
<div style="position:absolute;left:630px;top:0;width:489px;height:491px;overflow:hidden"><div style="position:absolute;left:-630px;top:0;width:1119px;height:491px"><div id="t125" class="t" style="left:629.7px;top:340.97px;font-size:11px;line-height:16px;color:#000000;font-weight:normal;font-family:'Liberation Mono', monospace;letter-spacing:-0.54px"><span style="color:#cfcfcf">···</span></div></div></div>
<div id="t126" class="t" style="left:569.2px;top:353.82px;font-size:11px;line-height:16px;color:#939393;font-weight:normal;font-family:'Liberation Mono', monospace;letter-spacing:-0.54px">342</div>
<div id="t127" class="t" style="left:599.2px;top:353.82px;font-size:11px;line-height:16px;color:#939393;font-weight:normal;font-family:'Liberation Mono', monospace;letter-spacing:-0.54px">342</div>
<div style="position:absolute;left:630px;top:0;width:489px;height:491px;overflow:hidden"><div style="position:absolute;left:-630px;top:0;width:1119px;height:491px"><div id="t128" class="t" style="left:629.7px;top:353.82px;font-size:11px;line-height:16px;color:#000000;font-weight:normal;font-family:'Liberation Mono', monospace;letter-spacing:-0.54px"><span style="color:#cfcfcf">·······</span>[DllImport(Attribute)]</div></div></div>
<div style="position:absolute;left:630px;top:369px;width:489px;height:12px;background:#ffe4e4"></div>
<div id="t130" class="t" style="left:569.2px;top:366.67px;font-size:11px;line-height:16px;color:#939393;font-weight:normal;font-family:'Liberation Mono', monospace;letter-spacing:-0.54px">343</div>
<div style="position:absolute;left:630px;top:0;width:489px;height:491px;overflow:hidden"><div style="position:absolute;left:-630px;top:0;width:1119px;height:491px"><div id="t131" class="t" style="left:629.7px;top:366.67px;font-size:11px;line-height:16px;color:#000000;font-weight:normal;font-family:'Liberation Mono', monospace;letter-spacing:-0.54px"><span style="color:#cfcfcf">·</span>-<span style="color:#cfcfcf">·····</span><span style="color:#0000ff">private</span><span style="color:#cfcfcf">·</span><span style="color:#0000ff">static</span><span style="color:#cfcfcf">·</span><span style="color:#0000ff">extern</span><span style="color:#cfcfcf">·</span><span style="color:#0000ff">double</span><span style="color:#cfcfcf">·</span>PulseVersion(<span style="color:#0000ff">out</span><span style="color:#cfcfcf">·</span>IntPtr<span style="color:#cfcfcf">·</span>version_str);</div></div></div>
<div style="position:absolute;left:630px;top:381px;width:489px;height:13px;background:#ddffdd"></div>
<div id="t133" class="t" style="left:599.2px;top:379.52px;font-size:11px;line-height:16px;color:#939393;font-weight:normal;font-family:'Liberation Mono', monospace;letter-spacing:-0.54px">343</div>
<div style="position:absolute;left:630px;top:0;width:489px;height:491px;overflow:hidden"><div style="position:absolute;left:-630px;top:0;width:1119px;height:491px"><div id="t134" class="t" style="left:629.7px;top:379.52px;font-size:11px;line-height:16px;color:#000000;font-weight:normal;font-family:'Liberation Mono', monospace;letter-spacing:-0.54px"><span style="color:#cfcfcf">·</span>+<span style="color:#cfcfcf">·····</span><span style="color:#0000ff">private</span><span style="color:#cfcfcf">·</span><span style="color:#0000ff">static</span><span style="color:#cfcfcf">·</span><span style="color:#0000ff">extern</span><span style="color:#cfcfcf">·</span><span style="color:#0000ff">void</span><span style="color:#cfcfcf">·</span>PulseVersion(<span style="color:#0000ff">out</span><span style="color:#cfcfcf">·</span>IntPtr<span style="color:#cfcfcf">·</span>version_str);</div></div></div>
<div id="t135" class="t" style="left:569.2px;top:392.37px;font-size:11px;line-height:16px;color:#939393;font-weight:normal;font-family:'Liberation Mono', monospace;letter-spacing:-0.54px">344</div>
<div id="t136" class="t" style="left:599.2px;top:392.37px;font-size:11px;line-height:16px;color:#939393;font-weight:normal;font-family:'Liberation Mono', monospace;letter-spacing:-0.54px">344</div>
<div style="position:absolute;left:630px;top:0;width:489px;height:491px;overflow:hidden"><div style="position:absolute;left:-630px;top:0;width:1119px;height:491px"><div id="t137" class="t" style="left:629.7px;top:392.37px;font-size:11px;line-height:16px;color:#000000;font-weight:normal;font-family:'Liberation Mono', monospace;letter-spacing:-0.54px"><span style="color:#cfcfcf">·······</span><span style="color:#0000ff">public</span><span style="color:#cfcfcf">·</span><span style="color:#0000ff">static</span><span style="color:#cfcfcf">·</span><span style="color:#0000ff">string</span><span style="color:#cfcfcf">·</span>Version()</div></div></div>
<div id="t138" class="t" style="left:569.2px;top:405.22px;font-size:11px;line-height:16px;color:#939393;font-weight:normal;font-family:'Liberation Mono', monospace;letter-spacing:-0.54px">345</div>
<div id="t139" class="t" style="left:599.2px;top:405.22px;font-size:11px;line-height:16px;color:#939393;font-weight:normal;font-family:'Liberation Mono', monospace;letter-spacing:-0.54px">345</div>
<div style="position:absolute;left:630px;top:0;width:489px;height:491px;overflow:hidden"><div style="position:absolute;left:-630px;top:0;width:1119px;height:491px"><div id="t140" class="t" style="left:629.7px;top:405.22px;font-size:11px;line-height:16px;color:#000000;font-weight:normal;font-family:'Liberation Mono', monospace;letter-spacing:-0.54px"><span style="color:#cfcfcf">·······</span>{</div></div></div>
<div id="t141" class="t" style="left:569.2px;top:418.07px;font-size:11px;line-height:16px;color:#939393;font-weight:normal;font-family:'Liberation Mono', monospace;letter-spacing:-0.54px">346</div>
<div id="t142" class="t" style="left:599.2px;top:418.07px;font-size:11px;line-height:16px;color:#939393;font-weight:normal;font-family:'Liberation Mono', monospace;letter-spacing:-0.54px">346</div>
<div style="position:absolute;left:630px;top:0;width:489px;height:491px;overflow:hidden"><div style="position:absolute;left:-630px;top:0;width:1119px;height:491px"><div id="t143" class="t" style="left:629.7px;top:418.07px;font-size:11px;line-height:16px;color:#000000;font-weight:normal;font-family:'Liberation Mono', monospace;letter-spacing:-0.54px"><span style="color:#cfcfcf">·········</span><span style="color:#0000ff">if</span><span style="color:#cfcfcf">·</span>(version.Length<span style="color:#cfcfcf">·</span>==<span style="color:#cfcfcf">·</span>0)</div></div></div>
<div id="t144" class="t" style="left:569.2px;top:430.92px;font-size:11px;line-height:16px;color:#939393;font-weight:normal;font-family:'Liberation Mono', monospace;letter-spacing:-0.54px">347</div>
<div id="t145" class="t" style="left:599.2px;top:430.92px;font-size:11px;line-height:16px;color:#939393;font-weight:normal;font-family:'Liberation Mono', monospace;letter-spacing:-0.54px">347</div>
<div style="position:absolute;left:630px;top:0;width:489px;height:491px;overflow:hidden"><div style="position:absolute;left:-630px;top:0;width:1119px;height:491px"><div id="t146" class="t" style="left:629.7px;top:430.92px;font-size:11px;line-height:16px;color:#000000;font-weight:normal;font-family:'Liberation Mono', monospace;letter-spacing:-0.54px"><span style="color:#cfcfcf">·········</span>{</div></div></div>
<div id="t147" class="t" style="left:569.2px;top:443.77px;font-size:11px;line-height:16px;color:#939393;font-weight:normal;font-family:'Liberation Mono', monospace;letter-spacing:-0.54px">348</div>
<div id="t148" class="t" style="left:599.2px;top:443.77px;font-size:11px;line-height:16px;color:#939393;font-weight:normal;font-family:'Liberation Mono', monospace;letter-spacing:-0.54px">348</div>
<div style="position:absolute;left:630px;top:0;width:489px;height:491px;overflow:hidden"><div style="position:absolute;left:-630px;top:0;width:1119px;height:491px"><div id="t149" class="t" style="left:629.7px;top:443.77px;font-size:11px;line-height:16px;color:#000000;font-weight:normal;font-family:'Liberation Mono', monospace;letter-spacing:-0.54px"><span style="color:#cfcfcf">···········</span>IntPtr<span style="color:#cfcfcf">·</span>str_addr;</div></div></div>
<div id="t150" class="t" style="left:569.2px;top:456.62px;font-size:11px;line-height:16px;color:#939393;font-weight:normal;font-family:'Liberation Mono', monospace;letter-spacing:-0.54px">349</div>
<div id="t151" class="t" style="left:599.2px;top:456.62px;font-size:11px;line-height:16px;color:#939393;font-weight:normal;font-family:'Liberation Mono', monospace;letter-spacing:-0.54px">349</div>
<div style="position:absolute;left:630px;top:0;width:489px;height:491px;overflow:hidden"><div style="position:absolute;left:-630px;top:0;width:1119px;height:491px"><div id="t152" class="t" style="left:629.7px;top:456.62px;font-size:11px;line-height:16px;color:#000000;font-weight:normal;font-family:'Liberation Mono', monospace;letter-spacing:-0.54px"><span style="color:#cfcfcf">···········</span>PulseVersion(<span style="color:#0000ff">out</span><span style="color:#cfcfcf">·</span>str_addr);</div></div></div>
<div id="t153" class="t" style="left:569.2px;top:469.47px;font-size:11px;line-height:16px;color:#939393;font-weight:normal;font-family:'Liberation Mono', monospace;letter-spacing:-0.54px">350</div>
<div id="t154" class="t" style="left:599.2px;top:469.47px;font-size:11px;line-height:16px;color:#939393;font-weight:normal;font-family:'Liberation Mono', monospace;letter-spacing:-0.54px">350</div>
<div style="position:absolute;left:630px;top:0;width:489px;height:491px;overflow:hidden"><div style="position:absolute;left:-630px;top:0;width:1119px;height:491px"><div id="t155" class="t" style="left:629.7px;top:469.47px;font-size:11px;line-height:16px;color:#000000;font-weight:normal;font-family:'Liberation Mono', monospace;letter-spacing:-0.54px"><span style="color:#cfcfcf">···········</span>version<span style="color:#cfcfcf">·</span>=<span style="color:#cfcfcf">·</span>System.Runtime.InteropServices.Marshal.PtrToStringAnsi(str_addr);</div></div></div>
<div id="t156" class="t" style="left:569.2px;top:482.32px;font-size:11px;line-height:16px;color:#939393;font-weight:normal;font-family:'Liberation Mono', monospace;letter-spacing:-0.54px">351</div>
<div id="t157" class="t" style="left:599.2px;top:482.32px;font-size:11px;line-height:16px;color:#939393;font-weight:normal;font-family:'Liberation Mono', monospace;letter-spacing:-0.54px">351</div>
<div style="position:absolute;left:630px;top:0;width:489px;height:491px;overflow:hidden"><div style="position:absolute;left:-630px;top:0;width:1119px;height:491px"><div id="t158" class="t" style="left:629.7px;top:482.32px;font-size:11px;line-height:16px;color:#000000;font-weight:normal;font-family:'Liberation Mono', monospace;letter-spacing:-0.54px"><span style="color:#cfcfcf">·········</span>}</div></div></div>
</body></html>
